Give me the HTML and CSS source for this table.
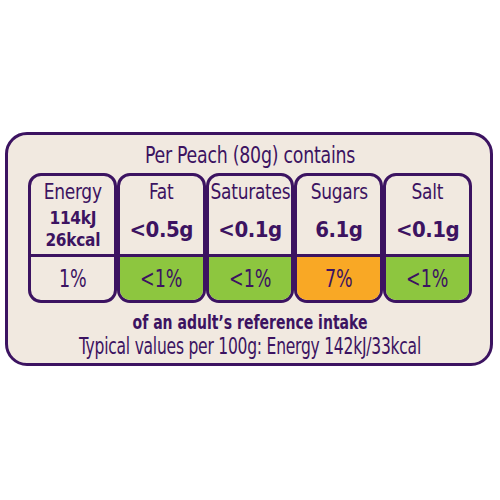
FILE: index.html
```html
<!DOCTYPE html>
<html>
	<head>
		<meta charset="utf-8">
		<title>Per Peach</title>
		<link rel="stylesheet" href="styles.css">
	</head>
	<body>
		<div class="label">
			<div class="title">Per Peach (80g) contains</div>
			<div class="cells">
				<div class="cell">
					<div class="top">
						<span class="name">Energy</span>
						<span class="energy">114kJ<br>26kcal</span>
					</div>
					<div class="pct"><span>1%</span></div>
				</div>
				<div class="cell">
					<div class="top">
						<span class="name">Fat</span>
						<span class="value">&lt;0.5g</span>
					</div>
					<div class="pct green"><span>&lt;1%</span></div>
				</div>
				<div class="cell">
					<div class="top">
						<span class="name">Saturates</span>
						<span class="value">&lt;0.1g</span>
					</div>
					<div class="pct green"><span>&lt;1%</span></div>
				</div>
				<div class="cell">
					<div class="top">
						<span class="name">Sugars</span>
						<span class="value">6.1g</span>
					</div>
					<div class="pct amber"><span>7%</span></div>
				</div>
				<div class="cell">
					<div class="top">
						<span class="name">Salt</span>
						<span class="value">&lt;0.1g</span>
					</div>
					<div class="pct green"><span>&lt;1%</span></div>
				</div>
			</div>
			<div class="ri">of an adult’s reference intake</div>
			<div class="typical">Typical values per 100g: Energy 142kJ/33kcal</div>
		</div>
	</body>
</html>
```

FILE: styles.css
```css
*{
    margin: 0;
    padding: 0;
    box-sizing: border-box;
}
body{
    background: #ffffff;
    font-family: "DejaVu Sans Condensed", "Liberation Sans Narrow", "Liberation Sans", sans-serif;
    color: #3c1361;
}
.label{
    margin: 132px 0 0 5px;
    width: 488px;
    height: 234px;
    background: #f1e9e0;
    border: 3px solid #3c1361;
    border-radius: 22px;
    padding: 5px 18px 0 20px;
}
.title,
.ri,
.typical{
    display: flex;
    justify-content: center;
    white-space: nowrap;
}
.title{
    font-size: 23px;
    line-height: 30px;
    letter-spacing: -0.3px;
    transform: scaleX(0.84);
}
.cells{
    display: grid;
    grid-template-columns: repeat(5, 1fr);
    margin-top: 3px;
}
.cell{
    border: 3px solid #3c1361;
    border-radius: 13px;
    overflow: hidden;
    display: flex;
    flex-direction: column;
}
.top{
    height: 81px;
    display: flex;
    flex-direction: column;
    align-items: center;
    border-bottom: 3px solid #3c1361;
}
.name{
    font-size: 22px;
    line-height: 24px;
    margin-top: 4px;
    letter-spacing: -0.3px;
    white-space: nowrap;
    transform: scaleX(0.86);
}
.value{
    font-size: 22px;
    font-weight: bold;
    line-height: 26px;
    margin-top: 13px;
    letter-spacing: -0.5px;
}
.energy{
    font-size: 18px;
    font-weight: bold;
    line-height: 22px;
    text-align: center;
    margin-top: 3px;
    letter-spacing: -0.3px;
    transform: scaleX(0.95);
}
.pct{
    height: 43px;
    line-height: 43px;
    text-align: center;
    font-size: 25px;
}
.pct span{
    display: inline-block;
    transform: scaleX(0.78);
}
.green{
    background: #8dc63f;
}
.amber{
    background: #f9a825;
}
.ri{
    font-weight: bold;
    font-size: 19px;
    line-height: 22px;
    margin-top: 8px;
    transform: scaleX(0.82);
}
.typical{
    font-size: 23px;
    line-height: 26px;
    letter-spacing: -0.3px;
    transform: scaleX(0.75);
}
```
